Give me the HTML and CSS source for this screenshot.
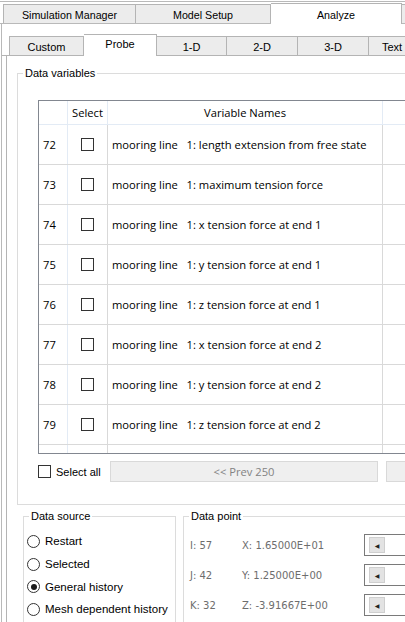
FILE: index.html
```html
<!DOCTYPE html>
<html>
<head>
<meta charset="utf-8">
<link rel="stylesheet" href="styles.css">
</head>
<body>
<div class="app">
  <div class="tabs outer-tabs">
    <div class="tab t-sim">Simulation Manager</div>
    <div class="tab t-model">Model Setup</div>
    <div class="tab sel t-an">Analyze</div>
    <div class="tab t-more"></div>
  </div>
  <div class="pane outer-pane">
    <div class="tabs inner-tabs">
      <div class="itab w74">Custom</div>
      <div class="itab sel w73">Probe</div>
      <div class="itab w70">1-D</div>
      <div class="itab w71">2-D</div>
      <div class="itab w71">3-D</div>
      <div class="itab w70 left">Text Output</div>
    </div>
    <div class="pane inner-pane">
      <fieldset class="group dv">
        <legend>Data variables</legend>
        <div class="dv-body">
          <div class="grid">
            <div class="row head">
              <div class="c-num"></div>
              <div class="c-sel">Select</div>
              <div class="c-name center">Variable Names</div>
              <div class="c-extra"></div>
            </div>
            <div class="row"><div class="c-num">72</div><div class="c-sel"><span class="cb"></span></div><div class="c-name">mooring line   1: length extension from free state</div><div class="c-extra"></div></div>
            <div class="row"><div class="c-num">73</div><div class="c-sel"><span class="cb"></span></div><div class="c-name">mooring line   1: maximum tension force</div><div class="c-extra"></div></div>
            <div class="row"><div class="c-num">74</div><div class="c-sel"><span class="cb"></span></div><div class="c-name">mooring line   1: x tension force at end 1</div><div class="c-extra"></div></div>
            <div class="row"><div class="c-num">75</div><div class="c-sel"><span class="cb"></span></div><div class="c-name">mooring line   1: y tension force at end 1</div><div class="c-extra"></div></div>
            <div class="row"><div class="c-num">76</div><div class="c-sel"><span class="cb"></span></div><div class="c-name">mooring line   1: z tension force at end 1</div><div class="c-extra"></div></div>
            <div class="row"><div class="c-num">77</div><div class="c-sel"><span class="cb"></span></div><div class="c-name">mooring line   1: x tension force at end 2</div><div class="c-extra"></div></div>
            <div class="row"><div class="c-num">78</div><div class="c-sel"><span class="cb"></span></div><div class="c-name">mooring line   1: y tension force at end 2</div><div class="c-extra"></div></div>
            <div class="row"><div class="c-num">79</div><div class="c-sel"><span class="cb"></span></div><div class="c-name">mooring line   1: z tension force at end 2</div><div class="c-extra"></div></div>
            <div class="row partial"><div class="c-num"></div><div class="c-sel"></div><div class="c-name"></div><div class="c-extra"></div></div>
          </div>
          <div class="foot">
            <div class="selall"><span class="cb"></span>Select all</div>
            <div class="btn prev">&lt;&lt; Prev 250</div>
            <div class="btn next"></div>
          </div>
        </div>
      </fieldset>
      <div class="bottom">
        <fieldset class="group ds">
          <legend>Data source</legend>
          <div class="ds-body">
            <div class="radio"><span class="rb"></span>Restart</div>
            <div class="radio"><span class="rb"></span>Selected</div>
            <div class="radio"><span class="rb on"></span>General history</div>
            <div class="radio"><span class="rb"></span>Mesh dependent history</div>
          </div>
        </fieldset>
        <fieldset class="group dp">
          <legend>Data point</legend>
          <div class="dp-body">
            <div class="pt"><span class="ijk">I: 57</span><span class="xyz">X: 1.65000E+01</span><div class="spin"><span class="sbtn">&#9664;</span></div></div>
            <div class="pt"><span class="ijk">J: 42</span><span class="xyz">Y: 1.25000E+00</span><div class="spin"><span class="sbtn">&#9664;</span></div></div>
            <div class="pt"><span class="ijk">K: 32</span><span class="xyz">Z: -3.91667E+00</span><div class="spin"><span class="sbtn">&#9664;</span></div></div>
          </div>
        </fieldset>
      </div>
    </div>
  </div>
</div>
</body>
</html>
```
FILE: styles.css
```css
html, body {
  margin: 0;
  padding: 0;
  background: #ffffff;
  overflow: hidden;
  width: 405px;
  height: 622px;
}
.app {
  width: 520px;
  height: 622px;
  border-top: 1px solid #b9b9b9;
  margin-top: 1px;
  display: flex;
  flex-direction: column;
  font-family: "Liberation Sans", Tahoma, sans-serif;
  font-size: 11px;
  color: #000;
  box-sizing: border-box;
}
.tabs {
  display: flex;
  align-items: flex-end;
  flex-shrink: 0;
}
.tabs > div { flex-shrink: 0; }
.outer-tabs {
  height: 22px;
  padding-left: 3px;
  border-bottom: 1px solid #b9b9b9;
  box-sizing: border-box;
}
.tab {
  height: 16px;
  border: 1px solid #b4b4b4;
  border-bottom: none;
  border-left: none;
  background: #ececec;
  display: flex;
  align-items: center;
  justify-content: center;
  font-size: 10.7px;
  padding-top: 2px;
  box-sizing: content-box;
}
.t-sim { width: 131px; border-left: 1px solid #b4b4b4; }
.t-model { width: 134px; }
.t-an { width: 130px; }
.t-more { width: 40px; }
.tab.sel {
  height: 19px;
  background: #ffffff;
  margin-bottom: -1px;
  padding-bottom: 1px;
  padding-top: 0;
  align-items: flex-start;
  line-height: 22px;
}
.outer-pane {
  flex: 1;
  margin-left: 1px;
  border-left: 1px solid #b9b9b9;
  display: flex;
  flex-direction: column;
  min-height: 0;
}
.inner-tabs {
  height: 32px;
  padding-left: 7px;
  border-bottom: 1px solid #b4b4b4;
  box-sizing: border-box;
}
.itab {
  height: 17px;
  padding-top: 1px;
  border: 1px solid #b4b4b4;
  border-bottom: none;
  border-left: none;
  background: #ececec;
  display: flex;
  align-items: center;
  justify-content: center;
  font-size: 11px;
  white-space: nowrap;
  overflow: hidden;
}
.itab.w74 { width: 73px; border-left: 1px solid #b4b4b4; }
.itab.w73 { width: 72px; }
.itab.w70 { width: 69px; }
.itab.w71 { width: 70px; }
.itab.left { justify-content: flex-start; padding-left: 13px; }
.itab.sel {
  height: 20px;
  padding-top: 0;
  background: #fff;
  margin-bottom: -1px;
  padding-bottom: 1px;
  align-items: flex-start;
  line-height: 18px;
}
.inner-pane {
  flex: 1;
  margin-left: 4px;
  border-left: 1px solid #b4b4b4;
  min-height: 0;
  display: flex;
  flex-direction: column;
}
fieldset.group {
  border: 1px solid #dcdcdc;
  margin: 0;
  padding: 0;
  min-width: 0;
  flex-shrink: 0;
}
fieldset.group legend {
  padding: 0 2px;
  margin-left: 5px;
  font-family: "Liberation Sans", Tahoma, sans-serif;
  font-size: 11px;
  line-height: 14px;
}
fieldset.dv {
  margin: 10px 0 0 10px;
  width: 460px;
  box-sizing: border-box;
}
.dv-body {
  padding: 20px 0 22px 20px;
}
.grid {
  border-top: 1px solid #828790;
  border-left: 1px solid #828790;
  border-bottom: 1px solid #828790;
  font-family: "Open Sans", "Noto Sans", sans-serif;
  font-size: 11.2px;
  width: 440px;
}
.row {
  display: flex;
  height: 40px;
  border-bottom: 1px solid #d9d9d9;
  box-sizing: border-box;
}
.row.head {
  height: 24px;
  border-bottom: 1px solid #e3ebf5;
}
.row.partial {
  height: 8px;
  border-bottom: none;
}
.row > div {
  display: flex;
  align-items: center;
  white-space: pre;
  box-sizing: border-box;
  flex-shrink: 0;
}
.c-num {
  width: 29px;
  padding-left: 4px;
  border-right: 1px solid #e3ebf5;
}
.c-sel {
  width: 40px;
  justify-content: center;
  border-right: 1px solid #d9d9d9;
}
.head .c-sel { border-right: 1px solid #e3ebf5; }
.c-name {
  width: 275px;
  padding-left: 4px;
  border-right: 1px solid #d9d9d9;
}
.head .c-name { border-right: 1px solid #e3ebf5; }
.c-name.center { justify-content: center; padding-left: 0; }
.row > .c-extra { flex: 1; }
.cb {
  display: inline-block;
  width: 11px;
  height: 11px;
  border: 1px solid #333;
  background: #fff;
  flex-shrink: 0;
}
.foot {
  display: flex;
  align-items: center;
  margin-top: 7px;
  height: 21px;
}
.foot > div { flex-shrink: 0; }
.selall {
  display: flex;
  align-items: center;
  width: 72px;
  white-space: nowrap;
  font-family: "Liberation Sans", Tahoma, sans-serif;
  font-size: 11px;
}
.selall .cb { margin-right: 5px; width: 11px; height: 11px; }
.btn {
  height: 19px;
  border: 1px solid #d9d9d9;
  background: #efefef;
  color: #838383;
  display: flex;
  align-items: center;
  justify-content: center;
  font-family: "Open Sans", "Noto Sans", sans-serif;
  font-size: 11.2px;
}
.prev { width: 266px; }
.next { width: 266px; margin-left: 8px; }
.bottom {
  display: flex;
  margin-top: 4px;
  margin-left: 16px;
  gap: 7px;
  flex: 1;
}
fieldset.ds {
  width: 153px;
  box-sizing: border-box;
}
.ds-body {
  padding: 7px 0 0 3px;
}
fieldset.dp {
  width: 300px;
  box-sizing: border-box;
}
.dp-body {
  padding: 7px 0 0 6px;
}
.radio {
  display: flex;
  align-items: center;
  height: 22.7px;
  white-space: nowrap;
  font-family: "Liberation Sans", Tahoma, sans-serif;
  font-size: 11.5px;
}
.rb {
  width: 11px;
  height: 11px;
  border: 1px solid #333;
  border-radius: 50%;
  margin-right: 5px;
  display: flex;
  align-items: center;
  justify-content: center;
  background: #fff;
  flex-shrink: 0;
}
.rb.on::after {
  content: "";
  width: 6px;
  height: 6px;
  border-radius: 50%;
  background: #1a1a1a;
}
.pt {
  display: flex;
  align-items: center;
  height: 30px;
  color: #6d6d6d;
  font-family: "DejaVu Sans", Tahoma, sans-serif;
  font-size: 10px;
  white-space: nowrap;
}
.pt > * { flex-shrink: 0; }
.ijk { width: 52px; }
.xyz { width: 122px; }
.spin {
  width: 80px;
  height: 20px;
  border: 1px solid #7a7a7a;
  display: flex;
  align-items: center;
  padding-left: 4px;
}
.sbtn {
  width: 16px;
  height: 16px;
  background: #e3e3e3;
  border: 1px solid #cfcfcf;
  box-sizing: border-box;
  font-size: 6px;
  color: #222;
  display: flex;
  align-items: center;
  justify-content: center;
}
```
